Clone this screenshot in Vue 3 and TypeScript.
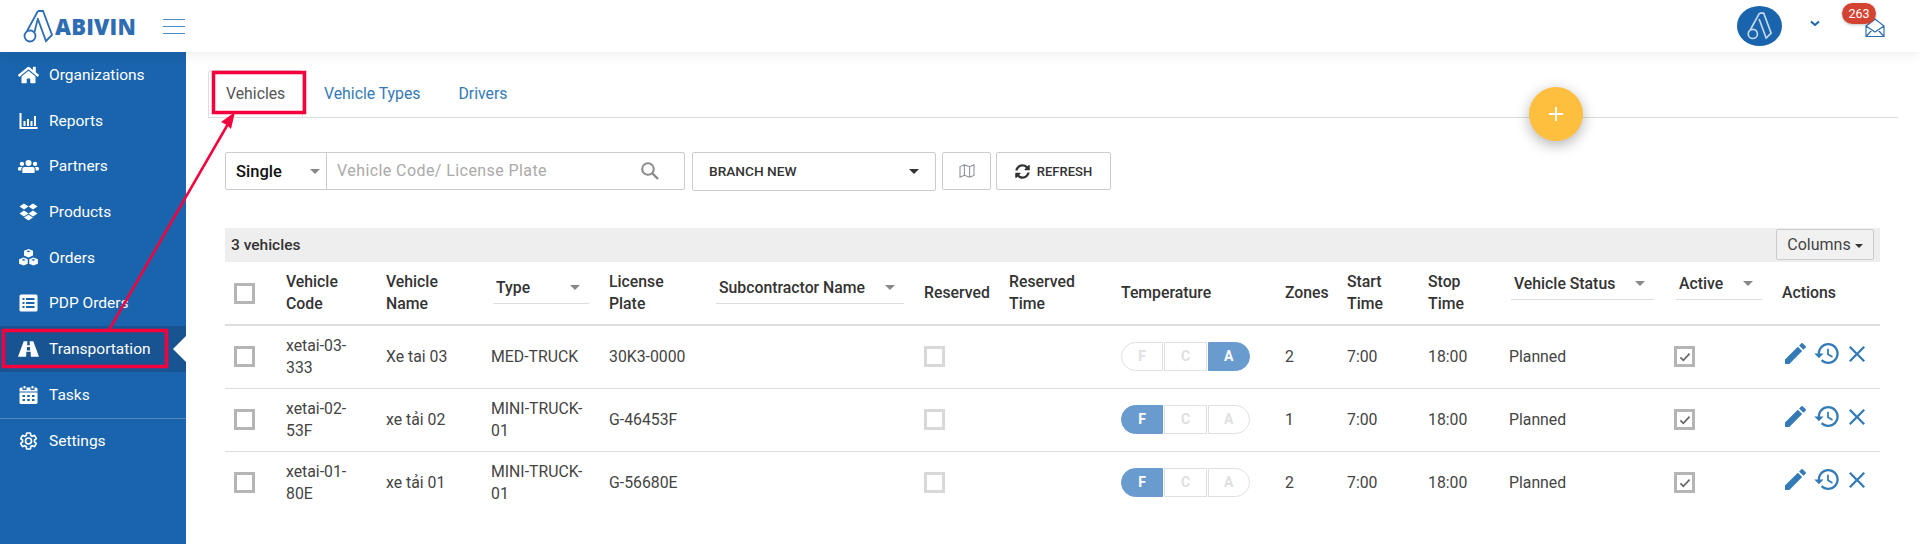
<script setup lang="ts">
// vehicles screen: top bar, sidebar, tabs, filters and the table
interface NavItem { label: string; box: string; d: string; stroke?: boolean; active?: boolean }

const nav: NavItem[] = [
  { label: 'Organizations', box: '0 0 576 512', d: 'M280.37 148.26L96 300.11V464a16 16 0 0 0 16 16l112.06-.29a16 16 0 0 0 15.92-16V368a16 16 0 0 1 16-16h64a16 16 0 0 1 16 16v95.64a16 16 0 0 0 16 16.05L464 480a16 16 0 0 0 16-16V300L295.67 148.26a12.19 12.19 0 0 0-15.3 0zM571.6 251.47L488 182.56V44.05a12 12 0 0 0-12-12h-56a12 12 0 0 0-12 12v72.61L318.47 43a48 48 0 0 0-61 0L4.34 251.47a12 12 0 0 0-1.6 16.9l25.5 31A12 12 0 0 0 45.15 301l235.22-193.74a12.19 12.19 0 0 1 15.3 0L530.9 301a12 12 0 0 0 16.9-1.6l25.5-31a12 12 0 0 0-1.7-16.93z' },
  { label: 'Reports', box: '0 0 20 20', d: 'M1 2h2v14h16v2H1zM5 10h2v5H5zM8.500 8h2v7h-2zM12 10h2v5h-2zM15.500 5h2v10h-2z' },
  { label: 'Partners', box: '0 0 24 20', d: 'M12 3a3.500 3.500 0 1 1 0 7 3.500 3.500 0 0 1 0-7zM4.500 5a2.500 2.500 0 1 1 0 5 2.500 2.500 0 0 1 0-5zM19.500 5a2.500 2.500 0 1 1 0 5 2.500 2.500 0 0 1 0-5zM7.500 11h9c1.500 0 2.500 1 2.500 2.500V18H5v-4.500C5 12 6 11 7.500 11zM1 11h4c-.8.700-1.200 1.600-1.200 2.500V15H1c-.6 0-1-.4-1-1v-1c0-1.200.8-2 1-2zM19 11h4c.2 0 1 .8 1 2v1c0 .6-.4 1-1 1h-2.800v-1.500c0-.9-.4-1.800-1.200-2.500z' },
  { label: 'Products', box: '0 0 20 20', d: 'M5.500 1.500L10 4.500 5.500 7.500 1 4.500zM14.500 1.500L19 4.500 14.500 7.500 10 4.500zM5.500 8.500L10 11.500 5.500 14.500 1 11.500zM14.500 8.500L19 11.500 14.500 14.500 10 11.500zM5.500 15.500L10 12.800 14.500 15.500 10 18.500z' },
  { label: 'Orders', box: '0 0 20 20', d: 'M10 1l4.500 1.800V7.500L10 9.500 5.500 7.500V2.800zM5.200 9.500l4 1.700v4.600l-4 1.800L.6 15.800v-4.600zM14.800 9.500l4.600 1.700v4.600l-4.600 1.800-4-1.800v-4.600zM5.200 11L3 11.900l2.200.9 2.200-.9zM14.800 11l-2.200.9 2.200.9 2.200-.9zM10 2.500l-2.200.8 2.200.9 2.200-.9z' },
  { label: 'PDP Orders', box: '0 0 20 20', d: 'M2.500 1.500h15A1.500 1.500 0 0 1 19 3v14a1.500 1.500 0 0 1-1.500 1.500h-15A1.500 1.500 0 0 1 1 17V3a1.500 1.500 0 0 1 1.500-1.500zM4 5v2h2V5zM7.500 5v2H16V5zM4 9v2h2V9zM7.500 9v2H16V9zM4 13v2h2v-2zM7.500 13v2H16v-2z' },
  { label: 'Transportation', active: true, box: '0 0 22 20', d: 'M6 2h3.800l-.2 4h2.800l-.2-4H16l6 16h-8.500l-.3-5H8.800l-.3 5H0zM9.500 8l-.2 3.500h3.400L12.500 8z' },
  { label: 'Tasks', box: '0 0 20 20', d: 'M5 1h2v2.500H5zM13 1h2v2.500h-2zM2.500 2.500H4V5h4V2.500h4V5h4V2.500h1.500A1.500 1.500 0 0 1 19 4v2.500H1V4a1.500 1.500 0 0 1 1.500-1.500zM1 7.500h18v10a1.500 1.500 0 0 1-1.500 1.500h-15A1.500 1.500 0 0 1 1 17.500zM4 10v2h2.500v-2zM8.700 10v2h2.600v-2zM13.500 10v2H16v-2zM4 14v2h2.500v-2zM8.700 14v2h2.600v-2zM13.500 14v2H16v-2z' },
  { label: 'Settings', stroke: true, box: '0 0 24 24', d: 'M19.140 12.940c.04-.3.06-.61.06-.94 0-.32-.02-.64-.07-.94l2.030-1.580c.18-.14.23-.41.12-.61l-1.920-3.320c-.12-.22-.37-.29-.59-.22l-2.390.96c-.5-.38-1.030-.7-1.620-.94l-.36-2.540c-.04-.24-.24-.41-.48-.41h-3.840c-.24 0-.43.17-.47.41l-.36 2.540c-.59.24-1.130.57-1.620.94l-2.390-.96c-.22-.08-.47 0-.59.22L2.740 8.870c-.12.21-.08.47.12.61l2.030 1.580c-.05.3-.09.63-.09.94s.02.64.07.94l-2.030 1.580c-.18.14-.23.41-.12.61l1.920 3.320c.12.22.37.29.59.22l2.390-.96c.5.38 1.030.7 1.620.94l.36 2.540c.05.24.24.41.48.41h3.840c.24 0 .44-.17.47-.41l.36-2.540c.59-.24 1.130-.56 1.620-.94l2.390.96c.22.08.47 0 .59-.22l1.920-3.320c.12-.22.07-.47-.12-.61l-2.010-1.580zM12 15.600c-1.980 0-3.600-1.620-3.600-3.600s1.620-3.600 3.600-3.600 3.600 1.620 3.600 3.600-1.620 3.600-3.600 3.600z' },
];

const tabs = ['Vehicles', 'Vehicle Types', 'Drivers'];

interface Col { label: string; width: number; filter?: boolean; raised?: boolean }
const cols: Col[] = [
  { label: 'Vehicle Code', width: 100 },
  { label: 'Vehicle Name', width: 105 },
  { label: 'Type', width: 118, filter: true },
  { label: 'License Plate', width: 105 },
  { label: 'Subcontractor Name', width: 210, filter: true },
  { label: 'Reserved', width: 85 },
  { label: 'Reserved Time', width: 112 },
  { label: 'Temperature', width: 164 },
  { label: 'Zones', width: 62 },
  { label: 'Start Time', width: 81 },
  { label: 'Stop Time', width: 81 },
  { label: 'Vehicle Status', width: 165, filter: true, raised: true },
  { label: 'Active', width: 108, filter: true, raised: true },
  { label: 'Actions', width: 104 },
];

const rows = [
  { code: 'xetai-03-333', name: 'Xe tai 03', type: 'MED-TRUCK', plate: '30K3-0000', temp: 'A', zones: 2 },
  { code: 'xetai-02-53F', name: 'xe tải 02', type: 'MINI-TRUCK-01', plate: 'G-46453F', temp: 'F', zones: 1 },
  { code: 'xetai-01-80E', name: 'xe tải 01', type: 'MINI-TRUCK-01', plate: 'G-56680E', temp: 'F', zones: 2 },
];
const temps = ['F', 'C', 'A'];
</script>

<template>
  <div class="page">
    <header class="topbar">
      <div class="brand">
        <svg class="brand-mark" viewBox="0 0 30 33" width="30" height="33">
          <path d="M15 1h5l9 24-6 6-8.500-23" fill="none" stroke="#2f6db3" stroke-width="1.800" />
          <path d="M15 1L4 21M11.500 22l3-12" fill="none" stroke="#2f6db3" stroke-width="1.800" />
          <circle cx="7" cy="26" r="5.500" fill="#fff" stroke="#2f6db3" stroke-width="1.800" />
        </svg>
        <span class="brand-name">ABIVIN</span>
      </div>
      <div class="burger"><i></i><i></i><i></i></div>
      <div class="top-right">
        <div class="avatar">
          <svg viewBox="0 0 30 33" width="25" height="28">
            <path d="M15 1h5l9 24-6 6-8.500-23" fill="none" stroke="#c5d8ee" stroke-width="2" />
            <path d="M15 1L4 21" fill="none" stroke="#c5d8ee" stroke-width="2" />
            <circle cx="7" cy="26" r="5.500" fill="#1a64ae" stroke="#c5d8ee" stroke-width="2" />
          </svg>
        </div>
        <svg class="chev" viewBox="0 0 10 7" width="10" height="7"><path d="M1 1.500l4 3.500 4-3.500" fill="none" stroke="#1a64ae" stroke-width="2" /></svg>
        <div class="mail">
          <svg viewBox="0 0 20 20" width="20" height="20">
            <path d="M1 8L10 1l9 7v10.500H1zM1 8l9 6 9-6M1 18.500l6.500-7M19 18.500l-6.500-7" fill="#fff" stroke="#2f6db3" stroke-width="1.200" />
          </svg>
          <span class="badge">263</span>
        </div>
      </div>
    </header>

    <div class="body">
      <aside class="sidebar">
        <div
          v-for="item in nav"
          :key="item.label"
          class="nav-item"
          :class="{ active: item.active, last: item.label === 'Settings' }"
        >
          <span class="nav-icon">
            <svg :viewBox="item.box" width="21" height="20" preserveAspectRatio="xMidYMid meet">
              <path v-if="item.stroke" :d="item.d" fill="none" stroke="#fff" stroke-width="2" />
              <path v-else :d="item.d" fill="#fff" fill-rule="evenodd" />
            </svg>
          </span>
          <span>{{ item.label }}</span>
        </div>
      </aside>

      <main class="content">
        <nav class="tabs">
          <a v-for="(t, i) in tabs" :key="t" class="tab" :class="{ current: i === 0 }">{{ t }}</a>
        </nav>

        <div class="filters">
          <div class="search">
            <div class="mode"><span>Single</span><b class="caret grey"></b></div>
            <div class="query">
              <span>Vehicle Code/ License Plate</span>
              <svg viewBox="0 0 20 20" width="20" height="20"><circle cx="8" cy="8" r="5.800" fill="none" stroke="#8a8a8a" stroke-width="2" /><path d="M12.500 12.500L18 18" stroke="#8a8a8a" stroke-width="2.400" /></svg>
            </div>
          </div>
          <div class="branch"><span>BRANCH NEW</span><b class="caret dark"></b></div>
          <button class="btn map-btn">
            <svg viewBox="0 0 18 16" width="16" height="14"><path d="M1 3l5-2 6 2 5-2v12l-5 2-6-2-5 2zM6 1v12M12 3v12" fill="none" stroke="#8a8f96" stroke-width="1.200" /></svg>
          </button>
          <button class="btn refresh-btn">
            <svg viewBox="0 0 512 512" width="15" height="15"><path fill="#333" d="M370.720 133.280C339.458 104.008 298.888 87.962 255.848 88c-77.458.068-144.328 53.178-162.791 126.850-1.344 5.363-6.122 9.150-11.651 9.150H24.103c-7.498 0-13.194-6.807-11.807-14.176C33.933 94.924 134.813 8 256 8c66.448 0 126.791 26.136 171.315 68.685L463.030 40.970C478.149 25.851 504 36.559 504 57.941V192c0 13.255-10.745 24-24 24H345.941c-21.382 0-32.090-25.851-16.971-40.971l41.750-41.749zM32 296h134.059c21.382 0 32.090 25.851 16.971 40.971l-41.750 41.750c31.262 29.273 71.835 45.319 114.876 45.280 77.418-.07 144.315-53.144 162.787-126.849 1.344-5.363 6.122-9.150 11.651-9.150h57.304c7.498 0 13.194 6.807 11.807 14.176C478.067 417.076 377.187 504 256 504c-66.448 0-126.791-26.136-171.315-68.685L48.970 471.030C33.851 486.149 8 475.441 8 454.059V320c0-13.255 10.745-24 24-24z" /></svg>
            <span>REFRESH</span>
          </button>
        </div>

        <div class="table-head">
          <strong>3 vehicles</strong>
          <button class="columns">Columns <b class="caret dark small"></b></button>
        </div>

        <table class="grid">
          <colgroup>
            <col style="width: 55px" />
            <col v-for="c in cols" :key="c.label" :style="{ width: c.width + 'px' }" />
          </colgroup>
          <thead>
            <tr>
              <th><span class="box"></span></th>
              <th v-for="c in cols" :key="c.label">
                <div v-if="c.filter" class="col-filter" :class="{ raised: c.raised }"><span>{{ c.label }}</span><b class="caret grey"></b></div>
                <template v-else>{{ c.label }}</template>
              </th>
            </tr>
          </thead>
          <tbody>
            <tr v-for="r in rows" :key="r.code">
              <td><span class="box"></span></td>
              <td class="code">{{ r.code }}</td>
              <td>{{ r.name }}</td>
              <td>{{ r.type }}</td>
              <td>{{ r.plate }}</td>
              <td></td>
              <td><span class="box light"></span></td>
              <td></td>
              <td>
                <div class="temps">
                  <span v-for="t in temps" :key="t" class="temp" :class="{ on: t === r.temp }">{{ t }}</span>
                </div>
              </td>
              <td>{{ r.zones }}</td>
              <td>7:00</td>
              <td>18:00</td>
              <td>Planned</td>
              <td>
                <span class="box checked">
                  <svg viewBox="0 0 14 12" width="12" height="10"><path d="M1.500 6.500l3.500 3.500 7.500-8" fill="none" stroke="#666" stroke-width="2" /></svg>
                </span>
              </td>
              <td>
                <div class="actions">
                  <svg viewBox="3 3 18.100 18" width="21" height="21"><path d="M3 17.250V21h3.750L17.810 9.940l-3.750-3.750L3 17.250zM20.710 7.040c.39-.39.39-1.020 0-1.410l-2.340-2.340c-.39-.39-1.020-.39-1.410 0l-1.830 1.830 3.750 3.750 1.830-1.830z" /></svg>
                  <svg viewBox="1 3 21 18" width="25" height="21"><path d="M13 3c-4.970 0-9 4.030-9 9H1l3.890 3.890.07.14L9 12H6c0-3.870 3.130-7 7-7s7 3.130 7 7-3.130 7-7 7c-1.930 0-3.680-.79-4.940-2.060l-1.420 1.420C8.270 19.990 10.510 21 13 21c4.970 0 9-4.030 9-9s-4.030-9-9-9zm-1 5v5l4.280 2.540.72-1.210-3.500-2.080V8H12z" /></svg>
                  <svg viewBox="5 5 14 14" width="16" height="16"><path d="M19 6.410L17.590 5 12 10.590 6.410 5 5 6.410 10.590 12 5 17.590 6.410 19 12 13.410 17.590 19 19 17.590 13.410 12z" /></svg>
                </div>
              </td>
            </tr>
          </tbody>
        </table>

        <button class="fab">
          <svg viewBox="0 0 16 16" width="16" height="16"><path d="M8 1v14M1 8h14" stroke="#fff" stroke-width="1.800" /></svg>
        </button>
      </main>
    </div>

    <!-- red annotations drawn over the screenshot -->
    <svg class="marks" width="1920" height="544" viewBox="0 0 1920 544">
      <rect x="213.500" y="72.500" width="91" height="40" fill="none" stroke="#f5003c" stroke-width="3.500" />
      <rect x="3.500" y="330.500" width="163" height="36" fill="none" stroke="#f5003c" stroke-width="3.500" />
      <path d="M109 330L228 124" stroke="#f5003c" stroke-width="2.500" fill="none" />
      <path d="M235 112L221 122 227 125 231 129z" fill="#f5003c" />
    </svg>
  </div>
</template>

<style scoped>
.page {
  position: relative;
  width: 1920px;
  height: 544px;
  overflow: hidden;
  background: #fff;
  font-family: Roboto, "Liberation Sans", sans-serif;
  color: #3a3a3a;
  font-size: 15.800px;
}
.topbar {
  position: relative;
  z-index: 2;
  height: 52px;
  display: flex;
  align-items: center;
  background: #fff;
  box-shadow: 0 2px 12px rgba(0, 0, 0, 0.08);
}
.brand { display: flex; align-items: center; gap: 2px; margin-left: 23px; width: 140px; }
.brand-name {
  font-family: "Open Sans", Roboto, sans-serif;
  font-weight: 800;
  font-size: 22px;
  letter-spacing: 0.2px;
  color: #2f6db3;
}
.burger { width: 22px; display: flex; flex-direction: column; gap: 6px; }
.burger i { display: block; height: 1px; background: #4f8ac9; }
.top-right { margin-left: auto; display: flex; align-items: center; margin-right: 35px; }
.avatar {
  width: 45px;
  height: 40px;
  border-radius: 50%;
  background: #1a64ae;
  display: flex;
  align-items: center;
  justify-content: center;
}
.chev { margin-left: 28px; margin-right: 45px; margin-top: -6px; }
.mail { position: relative; width: 20px; height: 20px; margin-top: 4px; }
.badge {
  position: absolute;
  right: 9px;
  top: -15px;
  width: 34px;
  height: 21px;
  line-height: 21px;
  border-radius: 11px;
  background: #d44332;
  color: #fff;
  font-size: 12.500px;
  text-align: center;
  box-shadow: 0 1px 3px rgba(0, 0, 0, 0.25);
}
.body { display: flex; height: 492px; }
.sidebar {
  width: 186px;
  flex: none;
  background: #1a64ae;
  color: #fff;
  font-size: 15.500px;
  display: flex;
  flex-direction: column;
}
.nav-item {
  position: relative;
  box-sizing: border-box;
  height: 45.700px;
  flex: none;
  display: flex;
  align-items: center;
  gap: 10px;
  padding-left: 18px;
}
.nav-icon { width: 21px; height: 20px; display: flex; }
.nav-item.active { background: #185492; }
.nav-item.active::after {
  content: "";
  position: absolute;
  right: 0;
  top: 50%;
  margin-top: -13px;
  border: 13px solid transparent;
  border-right-color: #fff;
  border-left-width: 0;
}
.nav-item.last { border-top: 1px solid rgba(255, 255, 255, 0.25); }
.content { position: relative; flex: 1; padding: 18px 0 0 39px; }
.tabs {
  display: flex;
  height: 47px;
  margin-right: 22px;
  margin-left: -17px;
  border-bottom: 1px solid #ddd;
}
.tab {
  padding: 0 17px 0 20px;
  line-height: 47px;
  height: 47px;
  box-sizing: border-box;
  color: #337ab7;
  margin-right: 1px;
}
.tab.current {
  color: #555;
  width: 95px;
  background: #fff;
  border: 1px solid #ddd;
  border-bottom-color: #fff;
  padding: 0 0 0 17px;
  line-height: 45px;
  border-radius: 4px 4px 0 0;
}
.filters { display: flex; align-items: flex-start; margin-top: 34px; height: 38px; }
.search {
  display: flex;
  width: 460px;
  height: 38px;
  box-sizing: border-box;
  border: 1px solid #ccc;
  border-radius: 2px;
}
.mode {
  width: 101px;
  flex: none;
  box-sizing: border-box;
  border-right: 1px solid #ccc;
  display: flex;
  align-items: center;
  justify-content: space-between;
  padding: 0 6px 0 10px;
  color: #111;
  font-size: 16.500px;
  font-weight: 500;
}
.query {
  flex: 1;
  display: flex;
  align-items: center;
  justify-content: space-between;
  padding: 0 24px 1px 10px;
  color: #aaa;
  font-size: 16px;
  letter-spacing: 0.42px;
}
.caret {
  display: inline-block;
  width: 0;
  height: 0;
  border-left: 5px solid transparent;
  border-right: 5px solid transparent;
  border-top: 5px solid #333;
}
.caret.grey { border-top-color: #888; }
.caret.small { border-left-width: 4px; border-right-width: 4px; border-top-width: 4px; vertical-align: middle; }
.branch {
  margin-left: 7px;
  width: 244px;
  height: 39px;
  box-sizing: border-box;
  border: 1px solid #ccc;
  border-radius: 2px;
  display: flex;
  align-items: center;
  justify-content: space-between;
  padding: 0 16px 1px 16px;
  font-size: 13.700px;
  font-weight: 500;
  color: #333;
}
.btn {
  height: 38px;
  box-sizing: border-box;
  background: #fff;
  border: 1px solid #ccc;
  border-radius: 2px;
  display: flex;
  align-items: center;
  justify-content: center;
  font: inherit;
}
.map-btn { margin-left: 6px; width: 49px; }
.refresh-btn {
  margin-left: 5px;
  width: 115px;
  gap: 7px;
  font-size: 13px;
  font-weight: 500;
  color: #333;
}
.table-head {
  margin-top: 38px;
  margin-right: 40px;
  height: 34px;
  box-sizing: border-box;
  background: #eee;
  display: flex;
  align-items: center;
  justify-content: space-between;
  padding: 0 6px 1px 6px;
}
.table-head strong { font-weight: 500; font-size: 15.500px; color: #333; }
.columns {
  width: 98px;
  height: 31px;
  background: #f1f1f1;
  border: 1px solid #ccc;
  border-radius: 2px;
  font: inherit;
  font-size: 16px;
  color: #444;
  padding: 0;
}
.grid {
  width: 1655px;
  table-layout: fixed;
  border-collapse: collapse;
}
.grid th {
  height: 63px;
  padding: 0 6px;
  text-align: left;
  font-weight: 500;
  line-height: 22px;
  color: #333;
  border-bottom: 2px solid #ddd;
  box-sizing: border-box;
}
.grid td {
  height: 63px;
  padding: 0 6px;
  line-height: 22px;
  border-bottom: 1px solid #ddd;
  box-sizing: border-box;
  color: #444;
}
.grid td.code { padding-right: 16px; }
.grid tbody tr:last-child td { border-bottom: none; }
.grid th:first-child, .grid td:first-child { padding-left: 9px; }
.col-filter {
  display: flex;
  align-items: center;
  justify-content: space-between;
  height: 32px;
  box-sizing: border-box;
  margin: 0 8px 10px 2px;
  padding: 0 9px 0 3px;
  border-bottom: 1px solid #ddd;
}
.col-filter.raised { margin-bottom: 18px; }
.box {
  display: block;
  width: 21px;
  height: 21px;
  box-sizing: border-box;
  border: 3px solid #b5b5b5;
  background: #fff;
}
.box.light { border-color: #d8d8d8; }
.box.checked { display: flex; align-items: center; justify-content: center; }
.temps { display: flex; width: 129px; height: 29px; gap: 1px; }
.temp {
  flex: 1;
  box-sizing: border-box;
  border: 1px solid #e0e0e0;
  color: #e0e0e0;
  font-weight: 700;
  font-size: 14px;
  text-align: center;
  line-height: 27px;
}
.temp:first-child { border-radius: 15px 0 0 15px; }
.temp:last-child { border-radius: 0 15px 15px 0; }
.temp.on { background: #6a9bcf; border-color: #6a9bcf; color: #fff; }
.actions { display: flex; align-items: center; gap: 8px; margin-top: -6px; padding-left: 3px; }
.actions svg { fill: #337ab7; flex: none; }
.actions svg:last-child { margin-left: 2px; }
.fab {
  position: absolute;
  left: 1343px;
  top: 35px;
  width: 54px;
  height: 54px;
  border: none;
  border-radius: 50%;
  background: #fdbf3d;
  box-shadow: 0 4px 14px rgba(0, 0, 0, 0.3);
  display: flex;
  align-items: center;
  justify-content: center;
  padding: 0;
}
.marks { position: absolute; left: 0; top: 0; z-index: 5; pointer-events: none; }
</style>
